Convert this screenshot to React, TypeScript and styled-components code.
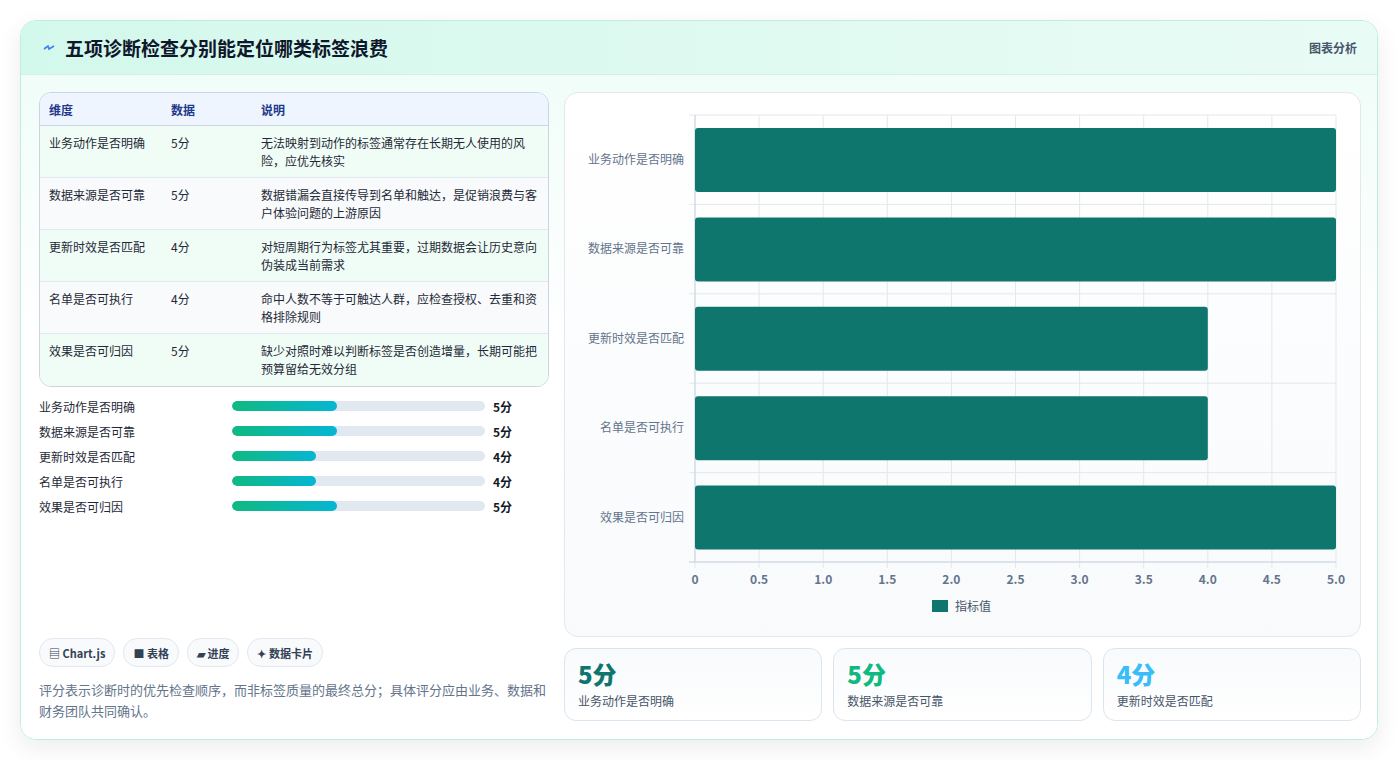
import React from "react"
import styled, { createGlobalStyle } from "styled-components"

const GlobalStyle = createGlobalStyle`
    body {
        margin: 0;
        background: #ffffff;
        font-family: "Noto Sans CJK SC", "Noto Sans", sans-serif;
    }
`

const rows = [
    { name: "业务动作是否明确", value: 5, note: "无法映射到动作的标签通常存在长期无人使用的风险，应优先核实" },
    { name: "数据来源是否可靠", value: 5, note: "数据错漏会直接传导到名单和触达，是促销浪费与客户体验问题的上游原因" },
    { name: "更新时效是否匹配", value: 4, note: "对短周期行为标签尤其重要，过期数据会让历史意向伪装成当前需求" },
    { name: "名单是否可执行", value: 4, note: "命中人数不等于可触达人群，应检查授权、去重和资格排除规则" },
    { name: "效果是否可归因", value: 5, note: "缺少对照时难以判断标签是否创造增量，长期可能把预算留给无效分组" },
]

const Page = styled.div`
    padding: 20px 21px 20px 20px;
`

const Card = styled.div`
    border: 1px solid #bfeee0;
    border-radius: 16px;
    background: #ffffff;
    box-shadow: 0 8px 24px rgba(15, 23, 42, 0.08);
    overflow: hidden;
    height: 718px;
    display: flex;
    flex-direction: column;
`

const Header = styled.div`
    height: 55px;
    display: flex;
    align-items: center;
    justify-content: space-between;
    padding: 0 20px 0 22px;
    background: linear-gradient(90deg, #d3f8ec, #e9fbf5);
    border-bottom: 1px solid #d5efe6;
`

const Title = styled.h1`
    margin: 0;
    font-size: 19px;
    font-weight: 700;
    color: #0f172a;
    display: flex;
    align-items: center;
    gap: 10px;
`

const HeaderTag = styled.span`
    font-size: 12px;
    font-weight: 700;
    color: #475569;
`

const Body = styled.div`
    flex: 1;
    display: grid;
    grid-template-columns: 510px 1fr;
    gap: 15px;
    padding: 17px 18px 18px 18px;
    background: linear-gradient(180deg, #f0fdf8, #ffffff 40%);
`

const LeftCol = styled.div`
    display: flex;
    flex-direction: column;
`

const Table = styled.table`
    width: 100%;
    border-collapse: separate;
    border-spacing: 0;
    border: 1px solid #cbd5e1;
    border-radius: 12px;
    overflow: hidden;
    font-size: 12px;
`

const Th = styled.th`
    text-align: left;
    font-weight: 700;
    color: #1e3a8a;
    background: #eef5ff;
    height: 32px;
    padding: 0 9px;
    border-bottom: 1px solid #cbd5e1;
`

const Tr = styled.tr<{ $alt: boolean }>`
    background: ${(p) => (p.$alt ? "#f8fafc" : "#f0fdf6")};
`

const Td = styled.td<{ $last: boolean }>`
    vertical-align: top;
    color: #1f2937;
    line-height: 18px;
    height: 52px;
    box-sizing: border-box;
    padding: 8px 9px 0;
    border-bottom: ${(p) => (p.$last ? "none" : "1px solid #e2e8f0")};
`

const BarList = styled.div`
    display: flex;
    flex-direction: column;
    gap: 7px;
    margin-top: 10px;
`

const BarRow = styled.div`
    display: grid;
    grid-template-columns: 185px 253px auto;
    gap: 8px;
    align-items: center;
    height: 18px;
    font-size: 12px;
    color: #1f2937;
`

const Track = styled.div`
    height: 10px;
    border-radius: 5px;
    background: #e2e8f0;
    overflow: hidden;
`

const Fill = styled.div`
    height: 100%;
    border-radius: 5px;
    background: linear-gradient(90deg, #10b981, #06b6d4);
`

const BarValue = styled.span`
    font-weight: 700;
    color: #111827;
`

const Chips = styled.div`
    margin-top: auto;
    display: flex;
    gap: 8px;
`

const Chip = styled.span`
    display: inline-flex;
    align-items: center;
    gap: 4px;
    height: 27px;
    padding: 0 9px;
    border: 1px solid #e2e8f0;
    border-radius: 14px;
    background: #f8fafc;
    font-size: 11px;
    font-weight: 700;
    color: #334155;
`

const Note = styled.p`
    margin: 12px 0 0;
    font-size: 13px;
    line-height: 21px;
    color: #64748b;
`

const RightCol = styled.div`
    display: flex;
    flex-direction: column;
    gap: 11px;
`

const ChartPanel = styled.div`
    height: 543px;
    border: 1px solid #e2e8f0;
    border-radius: 14px;
    background: linear-gradient(180deg, #ffffff, #f8fafc);
    overflow: hidden;
`

const Stats = styled.div`
    display: grid;
    grid-template-columns: repeat(3, 1fr);
    gap: 11px;
`

const Stat = styled.div`
    height: 73px;
    box-sizing: border-box;
    border: 1px solid #dbe5f0;
    border-radius: 12px;
    background: linear-gradient(180deg, #f8fafc, #ffffff);
    padding: 10px 13px;
`

const StatValue = styled.div<{ $color: string }>`
    font-size: 24px;
    font-weight: 800;
    line-height: 30px;
    color: ${(p) => p.$color};
`

const StatLabel = styled.div`
    font-size: 12px;
    color: #475569;
    margin-top: 3px;
`

const Chart = () => {
    const x0 = 130
    const x1 = 771
    const y0 = 22
    const y1 = 469
    const rowH = (y1 - y0) / 5
    const sx = (v: number) => x0 + ((x1 - x0) * v) / 5
    const ticks = [0, 0.5, 1, 1.5, 2, 2.5, 3, 3.5, 4, 4.5, 5]
    return (
        <svg width="795" height="543" style={{ display: "block" }}>
            {ticks.map((t) => (
                <line key={t} x1={sx(t)} x2={sx(t)} y1={y0} y2={y1 + 6} stroke="#e5e7eb" />
            ))}
            {[0, 1, 2, 3, 4, 5].map((i) => (
                <line key={i} x1={x0 - 6} x2={x1} y1={y0 + i * rowH} y2={y0 + i * rowH} stroke="#e5e7eb" />
            ))}
            <line x1={x0} x2={x0} y1={y0} y2={y1} stroke="#cbd5e1" />
            <line x1={x0 - 6} x2={x1} y1={y1} y2={y1} stroke="#cbd5e1" />
            {rows.map((r, i) => {
                const top = y0 + i * rowH + 13
                return (
                    <g key={r.name}>
                        <rect x={x0} y={top} width={sx(r.value) - x0} height={64} rx={3} fill="#0f766e" />
                        <text x={x0 - 11} y={top + 36} textAnchor="end" fontSize="12" fill="#64748b">
                            {r.name}
                        </text>
                    </g>
                )
            })}
            {ticks.map((t) => (
                <text key={t} x={sx(t)} y={y1 + 22} textAnchor="middle" fontSize="12" fontWeight="700" fill="#64748b">
                    {t === 0 ? "0" : t.toFixed(1)}
                </text>
            ))}
            <rect x={367} y={507} width={16} height={12} fill="#0f766e" />
            <text x={390} y={518} fontSize="12" fill="#475569">指标值</text>
        </svg>
    )
}

export default function App() {
    return (
        <Page>
            <GlobalStyle />
            <Card>
                <Header>
                    <Title>
                        <svg width="12" height="10" viewBox="0 0 12 10">
                            <path d="M1 6 L5 3 L6 6 L11 3" stroke="#3b82f6" strokeWidth="1.6" fill="none" />
                        </svg>
                        五项诊断检查分别能定位哪类标签浪费
                    </Title>
                    <HeaderTag>图表分析</HeaderTag>
                </Header>
                <Body>
                    <LeftCol>
                        <Table>
                            <thead>
                                <tr>
                                    <Th style={{ width: 104 }}>维度</Th>
                                    <Th style={{ width: 72 }}>数据</Th>
                                    <Th>说明</Th>
                                </tr>
                            </thead>
                            <tbody>
                                {rows.map((r, i) => (
                                    <Tr key={r.name} $alt={i % 2 === 1}>
                                        <Td $last={i === rows.length - 1}>{r.name}</Td>
                                        <Td $last={i === rows.length - 1}>{r.value}分</Td>
                                        <Td $last={i === rows.length - 1}>{r.note}</Td>
                                    </Tr>
                                ))}
                            </tbody>
                        </Table>
                        <BarList>
                            {rows.map((r) => (
                                <BarRow key={r.name}>
                                    <span>{r.name}</span>
                                    <Track>
                                        <Fill style={{ width: `${(r.value / 12) * 100}%` }} />
                                    </Track>
                                    <BarValue>{r.value}分</BarValue>
                                </BarRow>
                            ))}
                        </BarList>
                        <Chips>
                            <Chip>▤ Chart.js</Chip>
                            <Chip>■ 表格</Chip>
                            <Chip>▰ 进度</Chip>
                            <Chip>✦ 数据卡片</Chip>
                        </Chips>
                        <Note>评分表示诊断时的优先检查顺序，而非标签质量的最终总分；具体评分应由业务、数据和财务团队共同确认。</Note>
                    </LeftCol>
                    <RightCol>
                        <ChartPanel>
                            <Chart />
                        </ChartPanel>
                        <Stats>
                            <Stat>
                                <StatValue $color="#0f766e">5分</StatValue>
                                <StatLabel>业务动作是否明确</StatLabel>
                            </Stat>
                            <Stat>
                                <StatValue $color="#10b981">5分</StatValue>
                                <StatLabel>数据来源是否可靠</StatLabel>
                            </Stat>
                            <Stat>
                                <StatValue $color="#38bdf8">4分</StatValue>
                                <StatLabel>更新时效是否匹配</StatLabel>
                            </Stat>
                        </Stats>
                    </RightCol>
                </Body>
            </Card>
        </Page>
    )
}
